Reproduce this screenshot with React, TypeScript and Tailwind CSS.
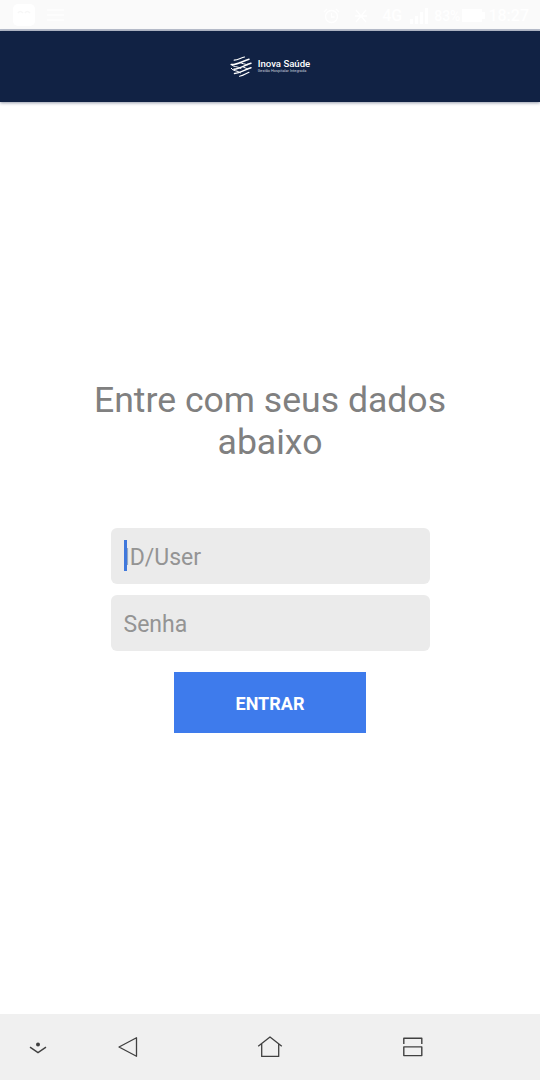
import { useState } from "react";

const StatusBar = () => (
  <div className="h-[31px] shrink-0 bg-[#fafafa] border-b-2 border-[#b9bfcc] flex items-center justify-between pl-3 pr-[11px] text-white">
    <div className="flex items-center gap-[11px]">
      <svg width="24" height="22" viewBox="0 0 24 22">
        <rect x="1" y="0" width="22" height="22" rx="5" fill="white" />
        <path d="M6 9q2-3 5 0M13 9q2-3 5 0" fill="none" stroke="#f7f7f7" strokeWidth="1.5" />
      </svg>
      <svg width="18" height="14" viewBox="0 0 18 14" stroke="white" strokeWidth="1.2">
        <path d="M0 2h17M0 7h17M0 12h17" />
      </svg>
    </div>
    <div className="flex items-center pt-0.5 font-['Roboto',sans-serif] text-base font-medium leading-none">
      <svg className="mr-[14px]" width="17" height="16" viewBox="0 0 17 16" fill="none" stroke="white" strokeWidth="1.3">
        <circle cx="8.5" cy="8.5" r="6" />
        <path d="M8.5 5v4h3M1 4l3-3M16 4l-3-3" />
      </svg>
      <svg className="mr-[14px]" width="14" height="16" viewBox="0 0 14 16" fill="none" stroke="white" strokeWidth="1.3">
        <path d="M2 2l10 12M12 2L2 14M1 8h12" />
      </svg>
      <span className="mr-2 text-base">4G</span>
      <svg className="mr-1.5" width="18" height="16" viewBox="0 0 18 16" fill="white">
        <path d="M0 11h3v5H0zM5 8h3v8H5zM10 4h3v12h-3zM15 0h3v16h-3z" />
      </svg>
      <span className="text-sm">83%</span>
      <svg className="mx-0.5" width="24" height="15" viewBox="0 0 24 15" fill="white">
        <path d="M0 1h20v3h3v7h-3v3H0z" />
      </svg>
      <span>18:27</span>
    </div>
  </div>
);

const Logo = () => (
  <div className="flex items-center gap-[6px] text-white">
    <svg width="22" height="21" viewBox="0 0 22 21" fill="none" stroke="white" strokeLinecap="round">
      <path d="M4.2 4.2C8 4.2 10.5 2 14.5 1" strokeWidth="1.2" />
      <path d="M1.2 8.6C7.5 9 12.5 5 19 3.2" strokeWidth="1.5" />
      <path d="M4 13.2C10 13 14.5 9 21 7.2" strokeWidth="1.5" />
      <path d="M4.5 17.4C10.5 17.2 15 13.4 21 11.8" strokeWidth="1.5" />
      <path d="M9.5 20.2C13 20 16 17.6 19 16.2" strokeWidth="1.1" />
      <path d="M1.2 8.6C2.5 11 8.5 10.4 11 12.4M1.2 12.4C2.5 15.2 8 14.4 10.5 16.8M10 6.6C12 8 15.5 7.6 17 9M13 10.8C14.5 12 16.5 12 17.5 13" strokeWidth="1" />
    </svg>
    <div className="font-['Roboto',sans-serif] whitespace-nowrap">
      <p className="h-[9px] text-[9.6px] leading-[9px] font-medium">Inova Saúde</p>
      <p className="h-[5px] w-[48px] text-[3.9px] leading-[5px] text-[#c5cbd9]">Gestão Hospitalar Integrada</p>
    </div>
  </div>
);

const NavigationBar = () => (
  <nav className="h-[66px] shrink-0 bg-[#f0f0f0] flex items-center text-[#404040]">
    <button className="ml-[29px]" aria-label="Ocultar">
      <svg width="18" height="14" viewBox="0 0 18 14" fill="none" stroke="currentColor" strokeWidth="1.4">
        <circle cx="9" cy="4.5" r="2" fill="currentColor" stroke="none" />
        <path d="M1 7.2L9 12.7l8-5.5" />
      </svg>
    </button>
    <button className="ml-[70px]" aria-label="Voltar">
      <svg width="22" height="22" viewBox="0 0 22 22" fill="none" stroke="currentColor" strokeWidth="1.3" strokeLinejoin="round">
        <path d="M2 11L19.5 1.7v18.6z" />
      </svg>
    </button>
    <button className="ml-[118px]" aria-label="Início">
      <svg width="26" height="24" viewBox="0 0 26 24" fill="none" stroke="currentColor" strokeWidth="1.3" strokeLinejoin="round">
        <path d="M1.2 11.3L13 2l11.8 9.3M4.7 8.8v12.6h17V8.8" />
      </svg>
    </button>
    <button className="ml-[119px]" aria-label="Recentes">
      <svg width="22" height="22" viewBox="0 0 22 22" fill="none" stroke="currentColor" strokeWidth="1.4" strokeLinejoin="round">
        <path d="M1.8 8V2.3h18V8M1.8 10.9h18v8.7h-18z" />
      </svg>
    </button>
  </nav>
);

const inputStyles =
  "block h-[56px] w-full rounded-[6px] bg-[#ebebeb] px-[13px] pt-[3px] text-[23px] text-[#444] placeholder:text-[#949494] placeholder:opacity-100 outline-none";

export default function App() {
  const [user, setUser] = useState("");
  const [password, setPassword] = useState("");

  return (
    <div className="h-[1080px] w-[540px] flex flex-col overflow-hidden bg-white font-['Roboto',sans-serif]">
      <StatusBar />
      <header className="h-[71px] shrink-0 bg-[#112244] flex items-center justify-center pb-px shadow-[0_1px_3px_rgba(17,34,68,0.45)]">
        <Logo />
      </header>

      <main className="flex-1 flex flex-col items-center pt-[277px]">
        <h1 className="w-[380px] text-center text-[35.6px] leading-[42px] text-[#808080]">
          Entre com seus dados abaixo
        </h1>
        <form
          className="mt-[65px] w-[319px] flex flex-col items-center"
          onSubmit={(e) => e.preventDefault()}
        >
          <div className="relative w-full">
            <input
              className={inputStyles}
              placeholder="ID/User"
              value={user}
              onChange={(e) => setUser(e.target.value)}
            />
            <span className="absolute left-[13px] top-[12px] h-[31px] w-[3px] bg-[#3f78dc]" />
          </div>
          <input
            className={`${inputStyles} mt-[11px]`}
            type="password"
            placeholder="Senha"
            value={password}
            onChange={(e) => setPassword(e.target.value)}
          />
          <button
            type="submit"
            className="mt-[21px] h-[61px] w-[192px] bg-[#3e7bec] pt-[2px] text-[18px] font-bold text-white"
          >
            ENTRAR
          </button>
        </form>
      </main>

      <NavigationBar />
    </div>
  );
}
